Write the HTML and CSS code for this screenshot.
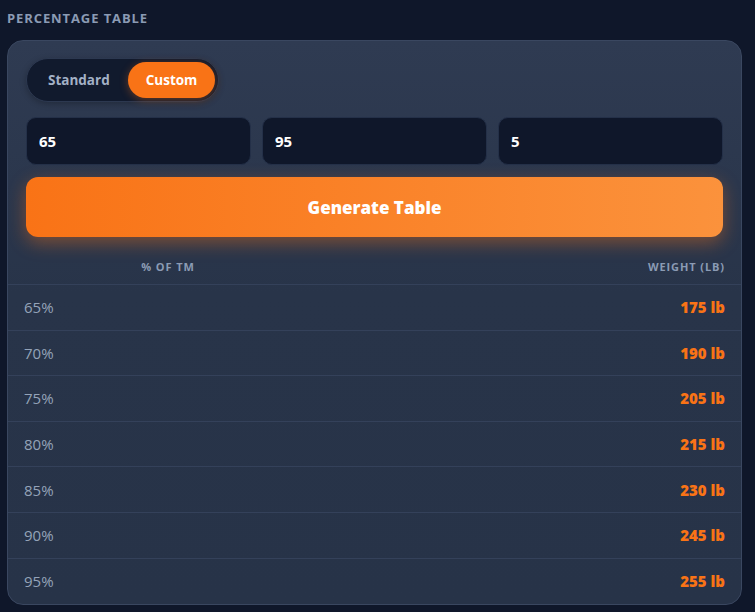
FILE: index.html
```html
<!DOCTYPE html>
<html lang="en">
<head>
    <meta charset="UTF-8">
    <meta name="viewport" content="width=device-width, initial-scale=1.0">
    <title>Percentage Table</title>
    <link rel="stylesheet" href="styles.css">
</head>
<body>
    <div class="section-title">Percentage Table</div>

    <div class="card">
        <!-- Mode switch -->
        <div class="mode-toggle">
            <button class="mode-btn">Standard</button>
            <button class="mode-btn active">Custom</button>
        </div>

        <!-- Start / end / step -->
        <div class="range-inputs">
            <input class="range-input" type="text" value="65">
            <input class="range-input" type="text" value="95">
            <input class="range-input" type="text" value="5">
        </div>

        <button class="generate-btn">Generate Table</button>

        <table class="pct-table">
            <thead>
                <tr>
                    <th class="col-pct">% of TM</th>
                    <th class="col-weight">Weight (lb)</th>
                </tr>
            </thead>
            <tbody id="pctRows"></tbody>
        </table>
    </div>

    <script>
        const rows = [
            [65, 175], [70, 190], [75, 205], [80, 215],
            [85, 230], [90, 245], [95, 255]
        ];

        const tbody = document.getElementById('pctRows');
        rows.forEach(([pct, lb]) => {
            const tr = document.createElement('tr');
            tr.innerHTML = '<td class="pct">' + pct + '%</td><td class="weight">' + lb + ' lb</td>';
            tbody.appendChild(tr);
        });
    </script>
</body>
</html>
```

FILE: styles.css
```css
body {
    font-family: 'Open Sans', 'Noto Sans', sans-serif;
    background-color: #0f172a;
    color: #e2e8f0;
    margin: 0;
    padding: 9px 13px 0 7px;
}

.section-title {
    font-size: 13px;
    font-weight: 700;
    letter-spacing: 0.9px;
    text-transform: uppercase;
    color: #8b9bb4;
    line-height: 19px;
    margin-bottom: 12px;
}

/* Card */
.card {
    background: linear-gradient(180deg, #2f3b52 0%, #283449 45%, #273348 100%);
    border: 1px solid #3a4760;
    border-radius: 16px;
    padding: 17px 18px 0;
    overflow: hidden;
    height: 565px;
    box-sizing: border-box;
}

/* Toggle */
.mode-toggle {
    display: inline-flex;
    padding: 3px;
    background-color: #111a2d;
    border: 1px solid #2c3850;
    border-radius: 999px;
    box-shadow: 0 2px 6px rgba(0, 0, 0, 0.25);
}

.mode-btn {
    font-family: inherit;
    font-size: 13.5px;
    font-weight: 700;
    color: #a3b1c6;
    background: none;
    border: none;
    border-radius: 999px;
    height: 36px;
    padding: 0 18px;
    cursor: pointer;
}

.mode-btn.active {
    background-color: #f97316;
    color: white;
    padding: 0 18px;
    box-shadow: 0 2px 8px rgba(249, 115, 22, 0.35);
}

/* Inputs */
.range-inputs {
    display: flex;
    gap: 11px;
    margin-top: 15px;
}

.range-input {
    flex: 1;
    min-width: 0;
    height: 48px;
    box-sizing: border-box;
    padding: 0 12px;
    font-family: inherit;
    font-size: 15px;
    font-weight: 700;
    color: white;
    background-color: #0f172a;
    border: 1px solid #243048;
    border-radius: 10px;
    outline: none;
}

.generate-btn {
    display: block;
    width: 100%;
    height: 60px;
    margin-top: 12px;
    font-family: inherit;
    font-size: 17px;
    font-weight: 800;
    color: white;
    background: linear-gradient(90deg, #f97316 0%, #fb923c 100%);
    border: none;
    border-radius: 12px;
    cursor: pointer;
    box-shadow: 0 6px 18px rgba(249, 115, 22, 0.4);
}

/* Table */
.pct-table {
    width: calc(100% + 36px);
    margin: 12px -18px 0;
    border-collapse: collapse;
}

.pct-table th {
    font-size: 11px;
    font-weight: 700;
    letter-spacing: 0.9px;
    text-transform: uppercase;
    color: #8b9bb4;
    height: 35px;
    padding: 0 16px;
    border-bottom: 1px solid #34415a;
}

.pct-table .col-pct {
    width: 288px;
    text-align: center;
}

.pct-table .col-weight {
    text-align: right;
}

.pct-table td {
    height: 44.6px;
    padding: 0 16px;
    font-size: 15px;
    border-bottom: 1px solid #34415a;
}

.pct-table tr:last-child td {
    border-bottom: none;
}

.pct {
    color: #94a3b8;
}

.weight {
    text-align: right;
    font-weight: 800;
    color: #f97316;
}
```
